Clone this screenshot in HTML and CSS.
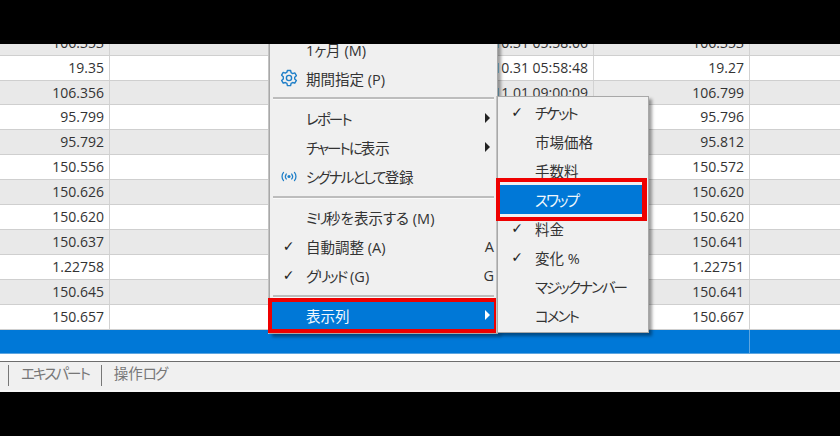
FILE: index.html
```html
<!DOCTYPE html>
<html lang="ja">
<head>
<meta charset="utf-8">
<title>表示列</title>
<link rel="stylesheet" href="styles.css">
</head>
<body>
<div class="screen">
  <div class="band"></div>
  <div class="window">
    <div class="table">
      <div class="row"><span class="cell c1">106.353</span><span class="cell c2"></span><span class="cell c3">2023.10.31 05:58:06</span><span class="cell c4">106.353</span><span class="cell c5"></span></div>
      <div class="row"><span class="cell c1">19.35</span><span class="cell c2"></span><span class="cell c3">2023.10.31 05:58:48</span><span class="cell c4">19.27</span><span class="cell c5"></span></div>
      <div class="row"><span class="cell c1">106.356</span><span class="cell c2"></span><span class="cell c3">2023.11.01 09:00:09</span><span class="cell c4">106.799</span><span class="cell c5"></span></div>
      <div class="row"><span class="cell c1">95.799</span><span class="cell c2"></span><span class="cell c3"></span><span class="cell c4">95.796</span><span class="cell c5"></span></div>
      <div class="row"><span class="cell c1">95.792</span><span class="cell c2"></span><span class="cell c3"></span><span class="cell c4">95.812</span><span class="cell c5"></span></div>
      <div class="row"><span class="cell c1">150.556</span><span class="cell c2"></span><span class="cell c3"></span><span class="cell c4">150.572</span><span class="cell c5"></span></div>
      <div class="row"><span class="cell c1">150.626</span><span class="cell c2"></span><span class="cell c3"></span><span class="cell c4">150.620</span><span class="cell c5"></span></div>
      <div class="row"><span class="cell c1">150.620</span><span class="cell c2"></span><span class="cell c3"></span><span class="cell c4">150.620</span><span class="cell c5"></span></div>
      <div class="row"><span class="cell c1">150.637</span><span class="cell c2"></span><span class="cell c3"></span><span class="cell c4">150.641</span><span class="cell c5"></span></div>
      <div class="row"><span class="cell c1">1.22758</span><span class="cell c2"></span><span class="cell c3"></span><span class="cell c4">1.22751</span><span class="cell c5"></span></div>
      <div class="row"><span class="cell c1">150.645</span><span class="cell c2"></span><span class="cell c3"></span><span class="cell c4">150.641</span><span class="cell c5"></span></div>
      <div class="row"><span class="cell c1">150.657</span><span class="cell c2"></span><span class="cell c3"></span><span class="cell c4">150.667</span><span class="cell c5"></span></div>
      <div class="row total"><span class="cell c1"></span><span class="cell c2"></span><span class="cell c3"></span><span class="cell c4"></span><span class="cell c5"></span></div>
    </div>
    <div class="gap"></div>
    <div class="tabs">
      <span class="tab"><span class="kana">エキスパート</span></span>
      <span class="tab">操作<span class="kana">ログ</span></span>
    </div>

    <div class="menu main-menu">
      <div class="item"><span class="lead"></span><span class="label">1ヶ月 (M)</span></div>
      <div class="item"><span class="lead">
        <svg class="icon" viewBox="0 0 18 18" width="18" height="18" fill="none" stroke="#1f7fc8" stroke-width="1.4" stroke-linejoin="round"><path d="M7.4 1.5h3.2l.5 2.2 1.5.9 2.2-.7 1.6 2.8-1.7 1.5v1.7l1.7 1.5-1.6 2.8-2.2-.7-1.5.9-.5 2.2H7.4l-.5-2.2-1.5-.9-2.2.7-1.6-2.8 1.7-1.5V7.7L1.6 6.2l1.6-2.8 2.2.7 1.5-.9z"/><circle cx="9" cy="9" r="2.6"/></svg>
      </span><span class="label">期間指定 (P)</span></div>
      <div class="sep"></div>
      <div class="item"><span class="lead"></span><span class="label"><span class="kana">レポート</span></span><span class="arrow"></span></div>
      <div class="item"><span class="lead"></span><span class="label"><span class="kana">チャートに</span>表示</span><span class="arrow"></span></div>
      <div class="item"><span class="lead">
        <svg class="icon" viewBox="0 0 22 12" width="20" height="11" fill="none" stroke="#1f7fc8" stroke-width="1.4" stroke-linecap="round"><path d="M5 1.500C2.800 4 2.800 8 5 10.500"/><path d="M8 3.300C6.800 4.900 6.800 7.100 8 8.700"/><circle cx="11" cy="6" r="1.700" fill="#1f7fc8" stroke="none"/><path d="M14 3.300c1.200 1.600 1.200 3.800 0 5.400"/><path d="M17 1.500c2.200 2.500 2.200 6.500 0 9"/></svg>
      </span><span class="label"><span class="kana">シグナルとして</span>登録</span></div>
      <div class="sep tall"></div>
      <div class="item"><span class="lead"></span><span class="label"><span class="kana">ミリ</span>秒を表示する (M)</span></div>
      <div class="item"><span class="lead check">✓</span><span class="label">自動調整 (A)</span><span class="key">A</span></div>
      <div class="item"><span class="lead check">✓</span><span class="label"><span class="kana">グリッド</span> (G)</span><span class="key">G</span></div>
      <div class="sep low"></div>
      <div class="item active"><span class="lead"></span><span class="label">表示列</span><span class="arrow"></span></div>
    </div>
    <div class="frame frame-main"></div>

    <div class="menu sub-menu">
      <div class="item"><span class="lead check">✓</span><span class="label"><span class="kana">チケット</span></span></div>
      <div class="item"><span class="lead"></span><span class="label">市場価格</span></div>
      <div class="item"><span class="lead"></span><span class="label">手数料</span></div>
      <div class="item active"><span class="lead"></span><span class="label"><span class="kana">スワップ</span></span></div>
      <div class="item"><span class="lead check">✓</span><span class="label">料金</span></div>
      <div class="item"><span class="lead check">✓</span><span class="label">変化 %</span></div>
      <div class="item"><span class="lead"></span><span class="label"><span class="kana">マジックナンバー</span></span></div>
      <div class="item"><span class="lead"></span><span class="label"><span class="kana">コメント</span></span></div>
    </div>
    <div class="frame frame-sub"></div>
  </div>
  <div class="band"></div>
</div>
</body>
</html>
```
FILE: styles.css
```css
* { box-sizing: border-box; }
html, body { margin: 0; padding: 0; }
body {
  width: 840px;
  height: 436px;
  overflow: hidden;
  background: #000;
  font-family: "Open Sans", "Noto Sans CJK JP", sans-serif;
  font-feature-settings: "palt";
  color: #333;
}
.screen { display: flex; flex-direction: column; width: 840px; height: 436px; }
.band { height: 44px; background: #000; flex: none; }
.window {
  position: relative;
  height: 348px;
  flex: none;
  overflow: hidden;
  background: #fff;
}
.table { margin-top: -13.2px; }
.row {
  display: grid;
  grid-template-columns: 110px 159px 325px 156px 90px;
  height: 24.9px;
  background: #fff;
  border-bottom: 1px solid #cfcfcf;
}
.row:nth-child(odd) { background: #e9e9e9; }
.row.total { background: #0078d7; border-bottom: 1px solid #5ea6e0; }
.cell {
  display: block;
  height: 100%;
  padding-right: 5px;
  text-align: right;
  font-size: 14px;
  line-height: 24px;
  border-right: 1px solid #d2d2d2;
  white-space: nowrap;
  overflow: hidden;
}
.total .cell { border-right-color: transparent; }
.total .c4 { border-right-color: #5ea6e0; }
.c5 { border-right: 0; }
.gap { height: 6.5px; }
.tabs {
  display: flex;
  align-items: center;
  height: 31px;
  background: #f0f0f0;
  border-top: 1px solid #6d6d6d;
  border-bottom: 2px solid #f7f7f7;
  padding-left: 8px;
  font-size: 14.5px;
  color: #777;
}
.tab {
  display: block;
  height: 21px;
  line-height: 17px;
  padding: 0 12px;
  border-left: 1px solid #777;
  white-space: nowrap;
}
.kana { letter-spacing: -1.9px; }
.menu {
  position: absolute;
  background: #f0f0f0;
  border: 1px solid #a8a8a8;
  box-shadow: 3px 3px 3px rgba(0, 0, 0, .38), -1px 0 0 #c4c4c4;
  padding: 2px 1px;
  font-size: 14.5px;
  color: #333;
}
.main-menu { left: 269px; top: -11px; width: 229px; height: 301px; }
.sub-menu { left: 497px; top: 52px; width: 152px; height: 237px; padding-top: 1px; }
.item {
  display: flex;
  align-items: center;
  height: 29px;
  padding-right: 4px;
  padding-bottom: 3px;
  white-space: nowrap;
}
.sub-menu .item { padding-bottom: 1px; }
.lead {
  display: flex;
  align-items: center;
  justify-content: center;
  width: 36px;
  flex: none;
}
.main-menu .lead { width: 35px; }
.check { font-size: 14px; font-weight: bold; color: #222; font-family: "DejaVu Sans", sans-serif; }
.icon { display: block; flex: none; }
.label { flex: 1; }
.key { font-size: 14.5px; margin-right: -2px; }
.arrow {
  width: 0;
  height: 0;
  margin-right: 2px;
  border-left: 5px solid #222;
  border-top: 5px solid transparent;
  border-bottom: 5px solid transparent;
}
.sep { height: 11px; padding-top: 3px; margin: 0 2px; }
.sep::after { content: ""; display: block; height: 2px; background: #bdbdbd; border-bottom: 1px solid #fafafa; }
.sep.tall { height: 12px; padding-top: 4px; }
.sep.low { padding-top: 4px; }
.active { background: #0078d7; color: #f2f8fd; }
.active .arrow { border-left-color: #fff; }
.frame {
  position: absolute;
  border-style: solid;
  border-color: #ee0000;
  pointer-events: none;
}
.frame-main { left: 268px; top: 254px; width: 229px; height: 35px; border-width: 4px 3px 4px 4px; }
.frame-sub { left: 496px; top: 134px; width: 151px; height: 43px; border-width: 4px 5px 4px 4px; }
```
